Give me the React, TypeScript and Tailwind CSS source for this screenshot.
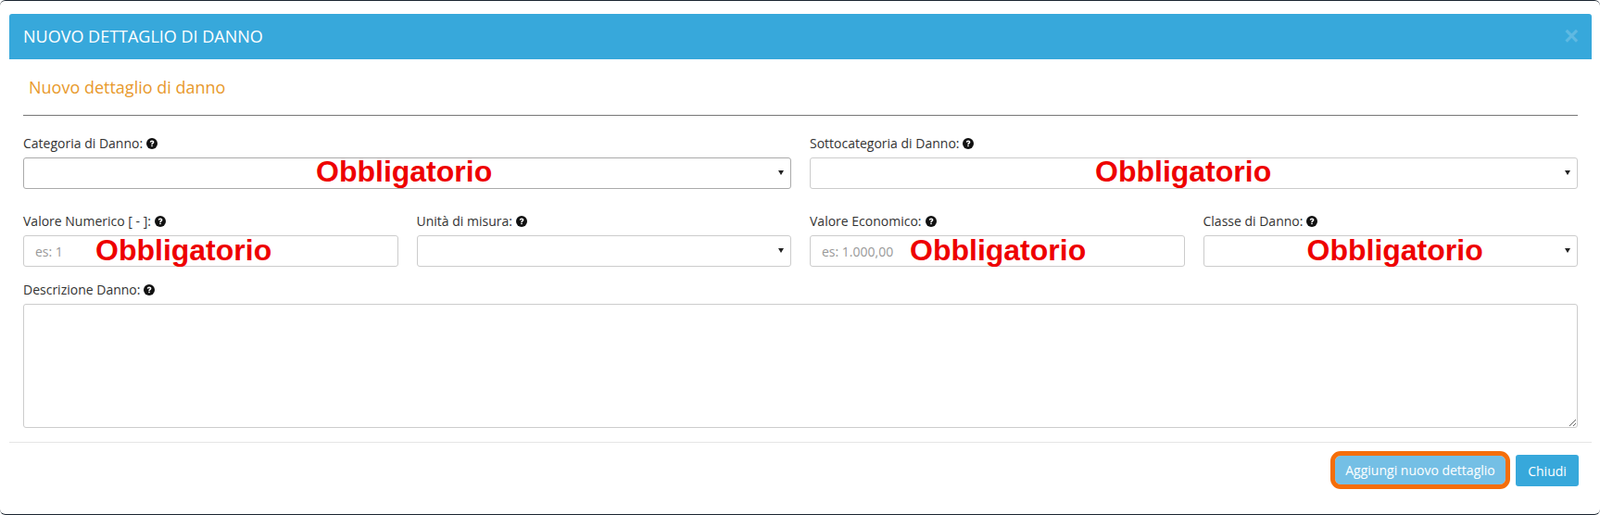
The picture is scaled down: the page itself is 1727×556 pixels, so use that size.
const HelpIcon = () => (
  <svg viewBox="0 0 24 24" className="inline-block w-3 h-3 ml-1 align-[-1px]">
    <circle cx="12" cy="12" r="12" fill="#111" />
    <path d="M7.500 9.200c.2-2.500 2.100-4 4.600-4 2.600 0 4.600 1.500 4.600 3.800 0 3-3.200 3-3.200 5.200h-3c0-3.700 3-3.500 3-5 0-.8-.6-1.300-1.500-1.300-1 0-1.500.5-1.700 1.500z" fill="#fff" />
    <rect x="10.500" y="15.300" width="3" height="3" fill="#fff" />
  </svg>
);

const Label = ({ text }: { text: string }) => (
  <label className="block h-[20px] mb-[5px] text-[14px] leading-[20px] text-[#333]">
    {text}
    <HelpIcon />
  </label>
);

const Required = ({ className }: { className: string }) => (
  <span className={`absolute font-['Liberation_Sans',sans-serif] font-bold text-[32px] leading-[34px] text-[#ee0000] pointer-events-none ${className}`}>
    Obbligatorio
  </span>
);

const fieldClass = "block w-full h-[34px] px-3 bg-white border rounded-[3px] text-[14px] text-[#555] placeholder:text-[#999] outline-none";

const Select = ({ dark }: { dark?: boolean }) => (
  <div className="relative">
    <select className={`${fieldClass} appearance-none ${dark ? "border-[#aaa]" : "border-[#ccc]"}`} />
    <svg viewBox="0 0 6 5" className="absolute right-[8px] top-[14px] w-[6px] h-[5px] pointer-events-none">
      <path d="M0 0h6L3 5z" fill="#222" />
    </svg>
  </div>
);

const App = () => {
  return (
    <div className="h-[556px] bg-white font-['Open_Sans',sans-serif] border-t border-b border-[#1b2530] rounded-[6px] pt-[14px] pl-[10px] pr-[9px]">
      {/* Header */}
      <div className="flex items-center justify-between h-[49px] pl-[15px] pr-[14px] bg-[#37a8db] rounded-t-[3px]">
        <h4 className="text-[18px] text-white">NUOVO DETTAGLIO DI DANNO</h4>
        <span className="font-['Liberation_Sans',sans-serif] font-bold text-[27px] leading-none text-white opacity-20">×</span>
      </div>

      <div className="px-[15px]">
        <h5 className="pt-[19px] pl-[6px] h-[61px] text-[18px] leading-[22px] text-[#e8992c] border-b border-[#777]">
          Nuovo dettaglio di danno
        </h5>

        {/* Categoria row */}
        <div className="grid grid-cols-2 gap-5 mt-[20px]">
          <div>
            <Label text="Categoria di Danno:" />
            <div className="relative">
              <Select dark />
              <Required className="top-[-2px] left-[316px]" />
            </div>
          </div>
          <div>
            <Label text="Sottocategoria di Danno:" />
            <div className="relative">
              <Select />
              <Required className="top-[-2px] left-[308px]" />
            </div>
          </div>
        </div>

        {/* Values row */}
        <div className="grid grid-cols-4 gap-5 mt-[25px]">
          <div>
            <Label text="Valore Numerico [ - ]:" />
            <div className="relative">
              <input className={`${fieldClass} border-[#ccc]`} placeholder="es: 1" />
              <Required className="top-[-1px] left-[78px]" />
            </div>
          </div>
          <div>
            <Label text="Unità di misura:" />
            <Select />
          </div>
          <div>
            <Label text="Valore Economico:" />
            <div className="relative">
              <input className={`${fieldClass} border-[#ccc]`} placeholder="es: 1.000,00" />
              <Required className="top-[-1px] left-[108px]" />
            </div>
          </div>
          <div>
            <Label text="Classe di Danno:" />
            <div className="relative">
              <Select />
              <Required className="top-[-1px] left-[112px]" />
            </div>
          </div>
        </div>

        {/* Description */}
        <div className="mt-[15px]">
          <Label text="Descrizione Danno:" />
          <textarea className="block w-full h-[134px] px-3 py-2 bg-white border border-[#ccc] rounded-[3px] text-[14px] outline-none" />
        </div>
      </div>

      {/* Footer */}
      <div className="flex items-start justify-end gap-[11px] mt-[15px] pt-[13px] pr-[14px] border-t border-[#e5e5e5]">
        <button className="mt-px h-[31px] w-[184px] bg-[#74bfe5] rounded-[6px] text-[14px] text-white outline-[5px] outline-[#f56e0a]">
          Aggiungi nuovo dettaglio
        </button>
        <button className="h-[34px] w-[68px] bg-[#37a8db] rounded-[3px] text-[14px] text-white">
          Chiudi
        </button>
      </div>
    </div>
  );
};

export default App;
